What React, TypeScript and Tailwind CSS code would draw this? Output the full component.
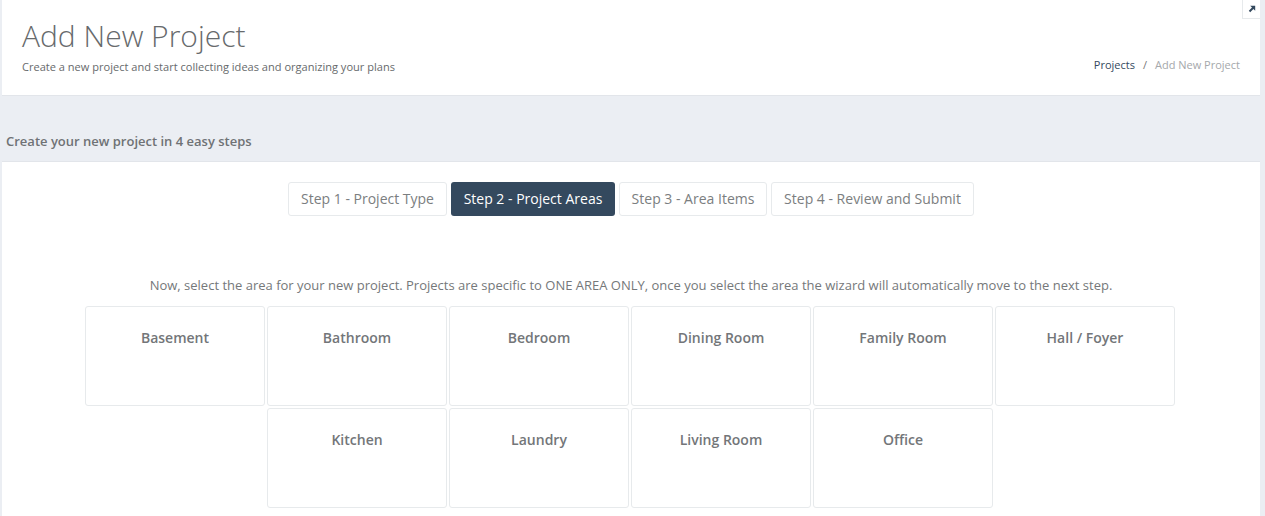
const steps = [
  { label: 'Step 1 - Project Type', width: 'w-[159px]' },
  { label: 'Step 2 - Project Areas', width: 'w-[164px]', active: true },
  { label: 'Step 3 - Area Items', width: 'w-[148px]' },
  { label: 'Step 4 - Review and Submit', width: 'w-[203px]' },
]

const areas = [
  'Basement',
  'Bathroom',
  'Bedroom',
  'Dining Room',
  'Family Room',
  'Hall / Foyer',
  'Kitchen',
  'Laundry',
  'Living Room',
  'Office',
]

export default function App() {
  return (
    <div className="h-[516px] overflow-hidden bg-[#ebeef3] pl-[2px] pr-[5px] font-['Open_Sans',sans-serif] text-[#676a6c]">
      <header className="relative flex h-[96px] items-end justify-between border-b border-[#e2e5ea] bg-white pb-[21px] pl-[20px] pr-[20px]">
        <div>
          <h1 className="text-[30px] font-light leading-[33px] text-[#676a6c]">Add New Project</h1>
          <p className="mt-[7px] text-[11.06px] leading-[15px]">
            Create a new project and start collecting ideas and organizing your plans
          </p>
        </div>
        <div className="mb-[2px] text-[11px] leading-[15px]">
          <span className="text-[#34495e]">Projects</span>
          <span className="px-[8px] text-[#777]">/</span>
          <span className="text-[#a5a8ab]">Add New Project</span>
        </div>
        <button className="absolute right-0 top-0 flex h-[19px] w-[18px] items-center justify-center border-b border-l border-[#e7eaec] bg-white">
          <svg width="8" height="8" viewBox="0 0 8 8" aria-hidden>
            <path d="M2.2 0.8H7.2V5.8L5.4 4L2.2 7.2L0.8 5.8L4 2.6Z" fill="#34495e" />
          </svg>
        </button>
      </header>

      <h2 className="ml-[4px] mt-[36px] text-[13px] font-semibold leading-[18px] text-[#6f7275]">
        Create your new project in 4 easy steps
      </h2>

      <main className="mt-[11px] h-[400px] border-t border-[#e2e5ea] bg-white">
        <nav className="flex justify-center gap-[4px] pt-[20px]">
          {steps.map(step => (
            <div
              key={step.label}
              className={
                step.active
                  ? `flex h-[34px] items-center justify-center rounded-[3px] bg-[#34495e] pb-[2px] text-[14px] font-medium text-white ${step.width}`
                  : `flex h-[34px] items-center justify-center rounded-[3px] border border-[#e7eaec] pb-[2px] text-[14px] text-[#7b7e80] ${step.width}`
              }
            >
              {step.label}
            </div>
          ))}
        </nav>

        <p className="mt-[60px] text-center text-[13px] leading-[18px] text-[#75787a]">
          Now, select the area for your new project. Projects are specific to ONE AREA ONLY, once you select the area
          the wizard will automatically move to the next step.
        </p>

        <div className="ml-[82px] mt-[11px] flex w-[1092px] flex-wrap justify-center">
          {areas.map(area => (
            <div
              key={area}
              className="m-px h-[100px] w-[180px] rounded-[3px] border border-[#e7eaec] pt-[21px] text-center text-[14px] font-semibold leading-[19px] text-[#737679]"
            >
              {area}
            </div>
          ))}
        </div>
      </main>
    </div>
  )
}
